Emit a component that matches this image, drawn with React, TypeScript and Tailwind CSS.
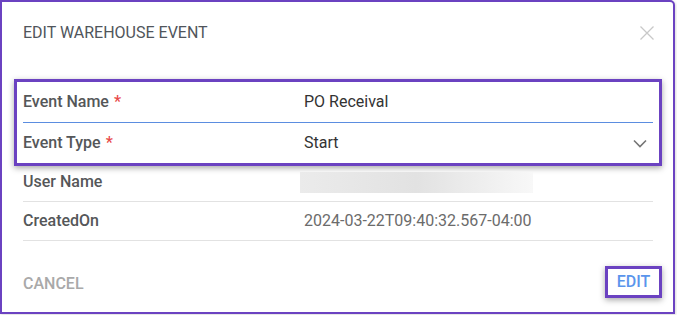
const font = { fontFamily: "Roboto, 'Noto Sans', sans-serif" };

function Row({
  label,
  required,
  children,
  className,
}: {
  label: string;
  required?: boolean;
  children: React.ReactNode;
  className?: string;
}) {
  return (
    <div className={"flex items-center " + (className ?? "")}>
      <div className="w-[281px] shrink-0 text-[16px] font-medium text-[#555759]">
        {label}
        {required && <span className="ml-[5px] text-[#e84a4a]">*</span>}
      </div>
      <div className="flex flex-1 items-center">{children}</div>
    </div>
  );
}

export default function App() {
  return (
    <div className="h-[315px] w-[677px] bg-white" style={font}>
      <div className="flex h-[314px] w-[675px] flex-col rounded-tr-[5px] border-2 border-[#6b42c1] bg-white pl-[21px] pr-[20px] shadow-[1px_1px_3px_rgba(0,0,0,0.15)]">
        {/* Header */}
        <div className="flex items-center justify-between pt-[21px]">
          <h2 className="text-[16px] leading-5 text-[#50555b]">EDIT WAREHOUSE EVENT</h2>
          <svg width="14" height="14" viewBox="0 0 14 14" className="mr-[-1px]">
            <path d="M0.5 0.5 L13.5 13.5 M13.5 0.5 L0.5 13.5" stroke="#c8c8c8" strokeWidth="1.3" fill="none" />
          </svg>
        </div>

        {/* Highlighted editable fields */}
        <div className="mx-[-9px] mt-[36px] border-[3px] border-[#6b42c1] px-[6px] shadow-[0_2px_6px_rgba(0,0,0,0.35)]">
          <Row label="Event Name" required className="h-[41px] border-b border-[#5b8de0]">
            <span className="text-[16px] text-[#333]">PO Receival</span>
          </Row>
          <Row label="Event Type" required className="h-[40px]">
            <span className="flex-1 text-[16px] text-[#333]">Start</span>
            <svg width="14" height="9" viewBox="0 0 14 9" className="mr-[6px]">
              <path d="M1 1.5 L7 7.5 L13 1.5" fill="none" stroke="#757575" strokeWidth="1.6" />
            </svg>
          </Row>
        </div>

        <Row label="User Name" className="h-[36px] border-b border-[#e2e2e2] pb-[3px]">
          <div className="ml-[-4px] h-[21px] w-[233px] bg-gradient-to-r from-[#ebebeb] via-[#e2e2e2] to-[#f8f8f8]" />
        </Row>
        <Row label="CreatedOn" className="h-[39px] border-b border-[#e2e2e2]">
          <span className="text-[16px] text-[#6b6b6b]">2024-03-22T09:40:32.567-04:00</span>
        </Row>

        {/* Footer */}
        <div className="mt-auto mb-[14px] flex items-center justify-between">
          <button className="pt-[3px] text-[16px] font-medium text-[#a9a9a9]">CANCEL</button>
          <button className="mr-[-9px] flex h-[32px] w-[57px] items-center justify-center border-[3px] border-[#6b42c1] text-[16px] font-medium text-[#5a95ec] shadow-[0_2px_6px_rgba(0,0,0,0.35)]">
            EDIT
          </button>
        </div>
      </div>
    </div>
  );
}
